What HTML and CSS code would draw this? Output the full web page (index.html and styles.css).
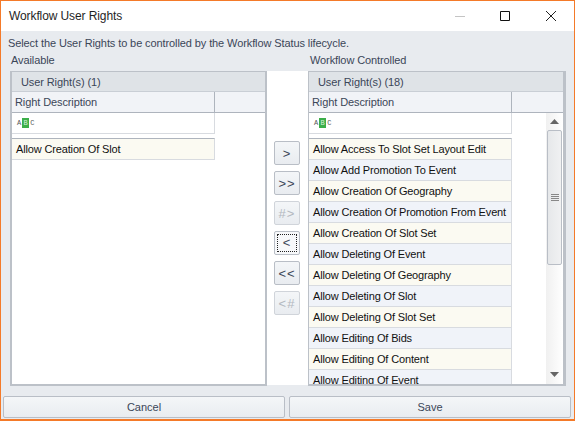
FILE: index.html
```html
<!DOCTYPE html>
<html lang="en">
<head>
  <meta charset="UTF-8">
  <title>Workflow User Rights</title>
  <link rel="stylesheet" href="styles.css">
</head>
<body>

<div class="window">
  <div class="titlebar">
    <div class="title">Workflow User Rights</div>
    <svg class="win-icon min" width="12" height="12" viewBox="0 0 12 12"><path d="M1 6.5h10" stroke="#c4c4c4" fill="none"/></svg>
    <svg class="win-icon max" width="12" height="12" viewBox="0 0 12 12"><path d="M1.5 1.5h9v9h-9z" stroke="#111" fill="none"/></svg>
    <svg class="win-icon close" width="12" height="12" viewBox="0 0 12 12"><path d="M1 1l10 10M11 1L1 11" stroke="#222" fill="none"/></svg>
  </div>

  <div class="content">
    <div class="intro">Select the User Rights to be controlled by the Workflow Status lifecycle.</div>

    <div class="columns">
      <div class="side left">
        <div class="side-label">Available</div>
        <div class="panel">
          <div class="group-head">User Right(s) (1)</div>
          <div class="col-head">
            <div class="col-main">Right Description</div>
            <div class="col-rest"></div>
          </div>
          <div class="panel-body">
            <div class="list">
              <div class="filter"><span class="abc">A<b>B</b>C</span></div>
              <div class="rows">
                <div class="row">Allow Creation Of Slot</div>
              </div>
            </div>
          </div>
        </div>
      </div>

      <div class="mover">
        <button class="move">&gt;</button>
        <button class="move">&gt;&gt;</button>
        <button class="move off">#&gt;</button>
        <button class="move focus"><span>&lt;</span></button>
        <button class="move">&lt;&lt;</button>
        <button class="move off">&lt;#</button>
      </div>

      <div class="side right">
        <div class="side-label">Workflow Controlled</div>
        <div class="panel">
          <div class="group-head">User Right(s) (18)</div>
          <div class="col-head">
            <div class="col-main">Right Description</div>
            <div class="col-rest"></div>
          </div>
          <div class="panel-body">
            <div class="list">
              <div class="filter"><span class="abc">A<b>B</b>C</span></div>
              <div class="rows">
                <div class="row">Allow Access To Slot Set Layout Edit</div>
                <div class="row">Allow Add Promotion To Event</div>
                <div class="row">Allow Creation Of Geography</div>
                <div class="row">Allow Creation Of Promotion From Event</div>
                <div class="row">Allow Creation Of Slot Set</div>
                <div class="row">Allow Deleting Of Event</div>
                <div class="row">Allow Deleting Of Geography</div>
                <div class="row">Allow Deleting Of Slot</div>
                <div class="row">Allow Deleting Of Slot Set</div>
                <div class="row">Allow Editing Of Bids</div>
                <div class="row">Allow Editing Of Content</div>
                <div class="row">Allow Editing Of Event</div>
              </div>
            </div>
            <div class="scrollbar">
              <svg width="9" height="5" viewBox="0 0 9 5"><path d="M4.5 0L9 5H0z" fill="#666"/></svg>
              <div class="thumb">
                <svg width="8" height="7" viewBox="0 0 8 7"><path d="M0 .5h8M0 2.5h8M0 4.500h8M0 6.500h8" stroke="#888" fill="none"/></svg>
              </div>
              <svg class="down" width="9" height="5" viewBox="0 0 9 5"><path d="M0 0h9L4.500 5z" fill="#666"/></svg>
            </div>
          </div>
        </div>
      </div>
    </div>

    <div class="actions">
      <button class="action">Cancel</button>
      <button class="action">Save</button>
    </div>
  </div>
</div>

</body>
</html>
```

FILE: styles.css
```css
* {
  box-sizing: border-box;
}

html, body {
  margin: 0;
  padding: 0;
}

body {
  font-family: 'Liberation Sans', Arial, sans-serif;
  font-size: 11px;
  letter-spacing: -0.1px;
  color: #3b4658;
  overflow: hidden;
}

.window {
  width: 575px;
  height: 421px;
  border: 1px solid #f47a29;
  border-width: 1px 1px 2px 1px;
  display: flex;
  flex-direction: column;
  background: #e8ebef;
}

.titlebar {
  height: 30px;
  background: #fff;
  display: flex;
  align-items: center;
  position: relative;
}

.title {
  margin-left: 8px;
  color: #1f1f1f;
  font-size: 12px;
}

.win-icon {
  position: absolute;
  top: 9px;
}

.min { left: 453px; }
.max { left: 498px; }
.close { left: 544px; }

.content {
  flex: 1;
  display: flex;
  flex-direction: column;
  min-height: 0;
}

.intro {
  height: 17px;
  line-height: 17px;
  margin: 4px 0 0 7px;
}

.columns {
  display: flex;
  height: 334px;
  margin-left: 9px;
}

.side {
  display: flex;
  flex-direction: column;
}

.left { width: 257px; }
.right { width: 258px; }

.side-label {
  height: 19px;
  line-height: 17px;
  margin-left: 1px;
}

.right .side-label {
  margin-left: 2px;
}

.panel {
  flex: 1;
  min-height: 0;
  display: flex;
  flex-direction: column;
  background: #fff;
  border: 2px solid #bcc1c8;
  border-width: 1px 2px 2px 2px;
}

.right .panel {
  border-width: 1px 3px 2px 1px;
}

.group-head {
  height: 20px;
  line-height: 20px;
  padding-left: 9px;
  background: #dfe3e7;
  border-bottom: 1px solid #c9ced5;
}

.col-head {
  height: 21px;
  display: flex;
  background: #f1f3f7;
  border-bottom: 1px solid #aeb4bd;
  line-height: 20px;
}

.col-main {
  width: 203px;
  padding-left: 3px;
  border-right: 1px solid #aeb4bd;
}

.col-rest {
  flex: 1;
}

.panel-body {
  flex: 1;
  min-height: 0;
  display: flex;
  overflow: hidden;
}

.list {
  flex: 1;
  min-width: 0;
}

.filter {
  width: 203px;
  height: 21px;
  display: flex;
  align-items: center;
  padding-left: 5px;
  border-bottom: 1px solid #d8dbe0;
  border-right: 1px solid #d8dbe0;
}

.abc {
  font-family: 'Liberation Mono', monospace;
  font-size: 7px;
  color: #555;
  letter-spacing: 0;
}

.abc b {
  display: inline-block;
  width: 7px;
  height: 10px;
  line-height: 10px;
  margin: 0 1px;
  text-align: center;
  font-weight: normal;
  background: #3cae4a;
  color: #d8f0da;
}

.rows {
  width: 203px;
  margin-top: 4px;
  border-top: 1px solid #aeb4bd;
  border-right: 1px solid #d8dbe0;
}

.row {
  height: 21px;
  line-height: 21px;
  padding-left: 4px;
  color: #111;
  background: #fbfaf2;
  border-bottom: 1px solid #d8dbe0;
  letter-spacing: -0.15px;
  white-space: nowrap;
}

.row:nth-child(even) {
  background: #f0f3f9;
}

.mover {
  width: 41px;
  margin: 19px 0 1px;
  padding: 70px 0 0 7px;
  background: #fff;
  display: flex;
  flex-direction: column;
  gap: 6px;
}

button {
  font-family: inherit;
  font-size: 11px;
  color: #3b4658;
  background: linear-gradient(#f4f6f8, #e9ecf0);
  border: 1px solid #b9bec6;
  border-radius: 2px;
  padding: 0;
}

.move {
  width: 26px;
  height: 24px;
  font-size: 13px;
  letter-spacing: 1px;
}

.move.off {
  color: #b3b8c0;
  border-color: #d0d4da;
}

.move.focus {
  background: #f7f8fa;
  padding: 2px;
}

.move.focus span {
  display: block;
  height: 100%;
  line-height: 16px;
  border: 1px dotted #222;
}

.scrollbar {
  width: 17px;
  flex: none;
  padding-top: 6px;
  background: linear-gradient(90deg, #f0f0f0, #fff);
  display: flex;
  flex-direction: column;
  align-items: center;
}

.thumb {
  width: 15px;
  height: 135px;
  margin-top: 6px;
  background: linear-gradient(90deg, #e6e8ea, #f0f1f2);
  border: 1px solid #b9bec6;
  border-radius: 2px;
  display: flex;
  align-items: center;
  justify-content: center;
}

.down {
  margin-top: 107px;
}

.actions {
  display: flex;
  gap: 4px;
  margin: 10px 3px 0 2px;
}

.action {
  flex: 1;
  height: 22px;
}
```
